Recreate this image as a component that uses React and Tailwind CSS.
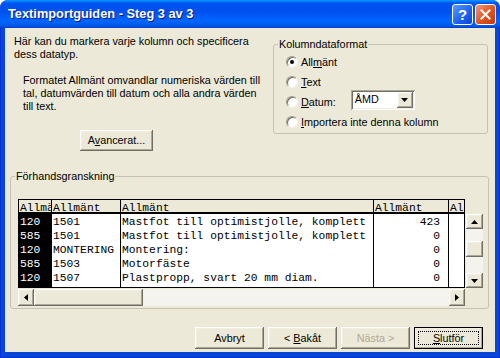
import React from 'react'

const raised =
  'bg-[#ECE9D8] shadow-[inset_-1px_-1px_#716f64,inset_1px_1px_#ffffff,inset_-2px_-2px_#aca899,inset_2px_2px_#f1efe2]'

function Arrow({ dir }) {
  const pts = {
    up: '0,4 3.5,0 7,4',
    down: '0,0 3.5,4 7,0',
    left: '4,0 0,3.5 4,7',
    right: '0,0 4,3.5 0,7',
  }[dir]
  const wide = dir === 'up' || dir === 'down'
  return (
    <svg width={wide ? 7 : 4} height={wide ? 4 : 7} viewBox={wide ? '0 0 7 4' : '0 0 4 7'}>
      <polygon points={pts} fill="#000" />
    </svg>
  )
}

function Radio({ checked, children }) {
  return (
    <div className="flex items-center h-[20px]">
      <span className="w-[12px] h-[12px] rounded-full bg-white border border-t-[#9d9a8c] border-l-[#9d9a8c] border-b-[#f4f3ee] border-r-[#f4f3ee] shadow-[inset_1px_1px_#716f64] flex items-center justify-center">
        {checked && <span className="w-[4px] h-[4px] rounded-full bg-black" />}
      </span>
      <span className="ml-[3px]">{children}</span>
    </div>
  )
}

function Btn({ children, className = '', disabled, isDefault }) {
  return (
    <div
      className={`w-[69px] h-[22px] flex items-center justify-center ${raised} ${
        isDefault ? 'outline outline-1 outline-black -outline-offset-1 p-[4px]' : ''
      } ${disabled ? 'text-[#aca899]' : 'text-black'} ${className}`}
    >
      {isDefault ? (
        <span className="w-full h-full flex items-center justify-center border border-dotted border-black">
          {children}
        </span>
      ) : (
        children
      )}
    </div>
  )
}

const cols = [
  { w: 'w-[33px]', head: 'Allmä', dark: true, data: ['120', '585', '120', '585', '120'] },
  { w: 'w-[69px]', head: 'Allmänt', data: ['1501', '1501', 'MONTERING', '1503', '1507'] },
  {
    w: 'w-[253px]',
    head: 'Allmänt',
    data: [
      'Mastfot till optimistjolle, komplett',
      'Mastfot till optimistjolle, komplett',
      'Montering:',
      'Motorfäste',
      'Plastpropp, svart 20 mm diam.',
    ],
  },
  { w: 'w-[75px]', head: 'Allmänt', right: true, data: ['423', '0', '0', '0', '0'] },
  { w: 'w-[15px]', head: 'Al', last: true, data: ['', '', '', '', ''] },
]

export default function App() {
  return (
    <div className="w-[500px] h-[358px] flex flex-col bg-[#0846D8] rounded-t-[8px] overflow-hidden font-['Liberation_Sans',Arial,sans-serif] text-[10.8px] text-black">
      {/* Title bar */}
      <div className="h-[28px] shrink-0 flex items-center pl-[8px] pr-[4px] bg-[linear-gradient(to_bottom,#0997FF_0%,#0053EE_12%,#0050EE_40%,#0066FF_75%,#0058E6_92%,#003DD0_100%)]">
        <span className="flex-1 text-white font-bold text-[12.8px] [text-shadow:1px_1px_#0a1883]">
          Textimportguiden - Steg 3 av 3
        </span>
        <div className="w-[21px] h-[21px] rounded-[3px] border border-white bg-[linear-gradient(135deg,#5a9bff,#1c5ff0_60%,#0a46d0)] flex items-center justify-center text-white font-bold text-[15px] leading-none">
          ?
        </div>
        <div className="ml-[2px] w-[21px] h-[21px] rounded-[3px] border border-white bg-[linear-gradient(135deg,#f09a76,#e0531e_55%,#c03a10)] flex items-center justify-center">
          <svg width="11" height="11" viewBox="0 0 11 11">
            <path d="M1.5 1.5 L9.5 9.5 M9.5 1.5 L1.5 9.5" stroke="#fff" strokeWidth="2" strokeLinecap="square" />
          </svg>
        </div>
      </div>

      {/* Frame + client */}
      <div className="flex-1 flex px-[4px] pb-[5px] border-l border-r border-b border-[#0831D9]">
        <div className="flex-1 bg-[#ECE9D8] flex flex-col">
          {/* Top section */}
          <div className="h-[148px] shrink-0 flex">
            <div className="w-[268px] pl-[9px] pt-[7px] leading-[13px]">
              <p>
                Här kan du markera varje kolumn och specificera
                <br />
                dess datatyp.
              </p>
              <p className="mt-[13px] pl-[9px]">
                Formatet Allmänt omvandlar numeriska värden till
                <br />
                tal, datumvärden till datum och alla andra värden
                <br />
                till text.
              </p>
              <Btn className="mt-[17px] ml-[66px] !w-[73px] !h-[21px]">
                <span>
                  A<u>v</u>ancerat...
                </span>
              </Btn>
            </div>
            <div className="mt-[16px] w-[215px] h-[90px] relative border border-[#C5C2B2] rounded-[3px] pl-[12px] pt-[7px]">
              <span className="absolute -top-[8px] left-[4px] px-[1px] bg-[#ECE9D8] leading-[14px]">
                Kolumndataformat
              </span>
              <Radio checked>
                All<u>m</u>änt
              </Radio>
              <Radio>
                <u>T</u>ext
              </Radio>
              <div className="flex items-center h-[20px]">
                <Radio>
                  <u>D</u>atum:
                </Radio>
                <div className="ml-[15px] mb-[5px] w-[64px] h-[20px] bg-white flex items-center shadow-[inset_1px_1px_#aca899,inset_-1px_-1px_#ffffff,inset_2px_2px_#716f64,inset_-2px_-2px_#f1efe2] p-[2px]">
                  <span className="flex-1 pl-[2px]">ÅMD</span>
                  <div className={`w-[16px] h-[16px] flex items-center justify-center ${raised}`}>
                    <Arrow dir="down" />
                  </div>
                </div>
              </div>
              <Radio>
                <u>I</u>mportera inte denna kolumn
              </Radio>
            </div>
          </div>

          {/* Preview group */}
          <div className="ml-[5px] w-[479px] h-[133px] shrink-0 relative border border-[#C5C2B2] rounded-[3px] pl-[7px] pt-[22px]">
            <span className="absolute -top-[8px] left-[4px] px-[1px] bg-[#ECE9D8] leading-[14px]">
              Förhandsgranskning
            </span>
            <div className="flex">
              <div className="w-[447px] h-[89px] flex border border-black font-['Liberation_Mono','Courier_New',monospace] text-[11.3px] overflow-hidden">
                {cols.map((c, i) => (
                  <div
                    key={i}
                    className={`${c.w} shrink-0 flex flex-col ${c.last ? '' : 'border-r border-black'}`}
                  >
                    <div className="h-[14px] bg-[#ECE9D8] border-b-2 border-black pl-[1px] pt-[2px] leading-[12px] whitespace-nowrap overflow-hidden">
                      {c.head}
                    </div>
                    <div
                      className={`flex-1 pt-[1px] leading-[14px] whitespace-pre overflow-hidden ${
                        c.dark ? 'bg-black text-white' : 'bg-white'
                      } ${c.right ? 'text-right pr-[8px]' : 'pl-[1px]'}`}
                    >
                      {c.data.map((d, j) => (
                        <div key={j} className="h-[14px]">
                          {d}
                        </div>
                      ))}
                    </div>
                  </div>
                ))}
              </div>
              {/* vertical scrollbar */}
              <div className="ml-[1px] w-[17px] flex flex-col">
                <div className="h-[15px]" />
                <div className="h-[74px] flex flex-col bg-[#F4F3EE]">
                  <div className={`h-[15px] flex items-center justify-center ${raised}`}>
                    <Arrow dir="up" />
                  </div>
                  <div className="h-[12px]" />
                  <div className={`h-[16px] ${raised}`} />
                  <div className="flex-1" />
                  <div className={`h-[15px] flex items-center justify-center ${raised}`}>
                    <Arrow dir="down" />
                  </div>
                </div>
              </div>
            </div>
            {/* horizontal scrollbar */}
            <div className="mt-[1px] w-[447px] h-[17px] flex bg-[#F4F3EE]">
              <div className={`w-[16px] flex items-center justify-center ${raised}`}>
                <Arrow dir="left" />
              </div>
              <div className={`w-[109px] ${raised}`} />
              <div className="flex-1" />
              <div className={`w-[16px] flex items-center justify-center ${raised}`}>
                <Arrow dir="right" />
              </div>
            </div>
          </div>

          {/* Buttons */}
          <div className="mt-[18px] flex justify-end gap-[4px] pr-[12px]">
            <Btn>Avbryt</Btn>
            <Btn>
              <span>
                &lt; <u>B</u>akåt
              </span>
            </Btn>
            <Btn disabled>
              <span>Nästa &gt;</span>
            </Btn>
            <Btn isDefault>
              <span>
                <u>S</u>lutför
              </span>
            </Btn>
          </div>
        </div>
      </div>
    </div>
  )
}
